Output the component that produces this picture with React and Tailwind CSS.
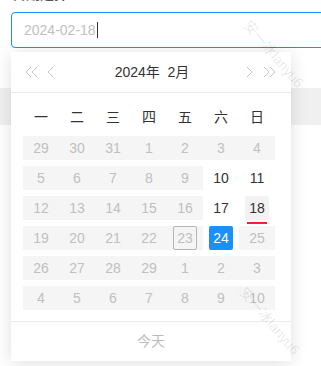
import React from 'react'

const font = { fontFamily: '"Liberation Sans", "Noto Sans CJK SC", sans-serif' }

const weekDays = ['一', '二', '三', '四', '五', '六', '日']

// each cell: n = label, off = greyed/disabled, mark = special state
const rows = [
  [29, 30, 31, 1, 2, 3, 4].map(n => ({ n, off: true })),
  [5, 6, 7, 8, 9].map(n => ({ n, off: true })).concat([{ n: 10 }, { n: 11 }]),
  [12, 13, 14, 15, 16].map(n => ({ n, off: true })).concat([{ n: 17 }, { n: 18, mark: 'hover' }]),
  [19, 20, 21, 22].map(n => ({ n, off: true })).concat([
    { n: 23, off: true, mark: 'today' },
    { n: 24, mark: 'selected' },
    { n: 25, off: true },
  ]),
  [26, 27, 28, 29, 1, 2, 3].map(n => ({ n, off: true })),
  [4, 5, 6, 7, 8, 9, 10].map(n => ({ n, off: true })),
]

function Chevron({ left, double }) {
  const w = double ? 13 : 7
  const pts = left ? ['6,1 1,6 6,11', '12,1 7,6 12,11'] : ['1,1 6,6 1,11', '7,1 12,6 7,11']
  return (
    <svg width={w} height="12" viewBox={`0 0 ${w} 12`} fill="none" stroke="#c4c4c4" strokeWidth="1">
      <polyline points={pts[0]} />
      {double && <polyline points={pts[1]} />}
    </svg>
  )
}

function Cell({ cell }) {
  const { n, off, mark } = cell
  let inner = 'w-[24px] h-[24px] flex items-center justify-center rounded-[2px]'
  if (mark === 'selected') inner += ' bg-[#1890ff] text-white'
  else if (mark === 'hover') inner += ' bg-[#f2f2f2] text-[#333]'
  else if (mark === 'today') inner += ' border border-[#b5b5b5] text-[#c0c0c0]'
  else if (off) inner += ' text-[#c0c0c0]'
  else inner += ' text-[#333]'

  return (
    <div className={`relative w-[36px] h-[24px] flex items-center justify-center ${off ? 'bg-[#f5f5f5]' : ''}`}>
      <div className={inner}>{n}</div>
      {mark === 'hover' && (
        <div className="absolute left-[8px] top-[26px] w-[20px] h-[2px] bg-[#f5222d]" />
      )}
    </div>
  )
}

function Watermark({ className }) {
  return (
    <div
      className={`absolute pointer-events-none origin-top-left rotate-[49deg] text-[14px] text-[rgba(0,0,0,0.1)] whitespace-nowrap ${className}`}
    >
      安一冰lanyu6
    </div>
  )
}

export default function App() {
  return (
    <div className="relative w-[321px] h-[366px] overflow-hidden bg-white text-[14px]" style={font}>
      {/* field label, mostly scrolled off the top */}
      <div className="h-[12px] overflow-hidden pl-[12px]">
        <div className="-mt-[13px] leading-[14px] font-bold text-[#555]">日期选择</div>
      </div>

      {/* input */}
      <div className="ml-[11px] w-[330px] h-[36px] border border-[#1890ff] rounded-[4px] flex items-center pl-[12px] text-[#bfbfbf]">
        <span>2024-02-18</span>
        <span className="ml-[1px] w-[1px] h-[16px] bg-[#333]" />
      </div>

      {/* table header behind the popup */}
      <div className="mt-[40px] h-[37px] bg-[#f0f0f0]" />

      {/* date picker popup */}
      <div className="absolute left-[11px] top-[52px] w-[280px] h-[309px] bg-white shadow-[0_2px_16px_rgba(0,0,0,0.13)] flex flex-col">
        <div className="h-[41px] border-b border-[#ebebeb] flex items-center pl-[14px] pr-[15px]">
          <Chevron left double />
          <span className="ml-[9px] flex"><Chevron left /></span>
          <div className="flex-1 text-center text-[#333] pl-[4px]">2024年&nbsp;&nbsp;2月</div>
          <Chevron />
          <span className="ml-[10px] flex"><Chevron double /></span>
        </div>

        <div className="px-[12px] pt-[12px]">
          <div className="flex h-[24px] text-[#333]">
            {weekDays.map(d => (
              <div key={d} className="w-[36px] flex items-center justify-center">{d}</div>
            ))}
          </div>
          <div className="mt-[7px] flex flex-col gap-[6px]">
            {rows.map((row, i) => (
              <div key={i} className="flex">
                {row.map((cell, j) => <Cell key={j} cell={cell} />)}
              </div>
            ))}
          </div>
        </div>

        <div className="mt-[11px] flex-1 border-t border-[#ebebeb] flex items-center justify-center text-[#bbb]">
          今天
        </div>
      </div>

      {/* watermarks */}
      <Watermark className="left-[254px] top-[16px]" />
      <Watermark className="left-[250px] top-[283px]" />
      <Watermark className="left-[-66px] top-[22px]" />
      <Watermark className="left-[-70px] top-[288px]" />
    </div>
  )
}
